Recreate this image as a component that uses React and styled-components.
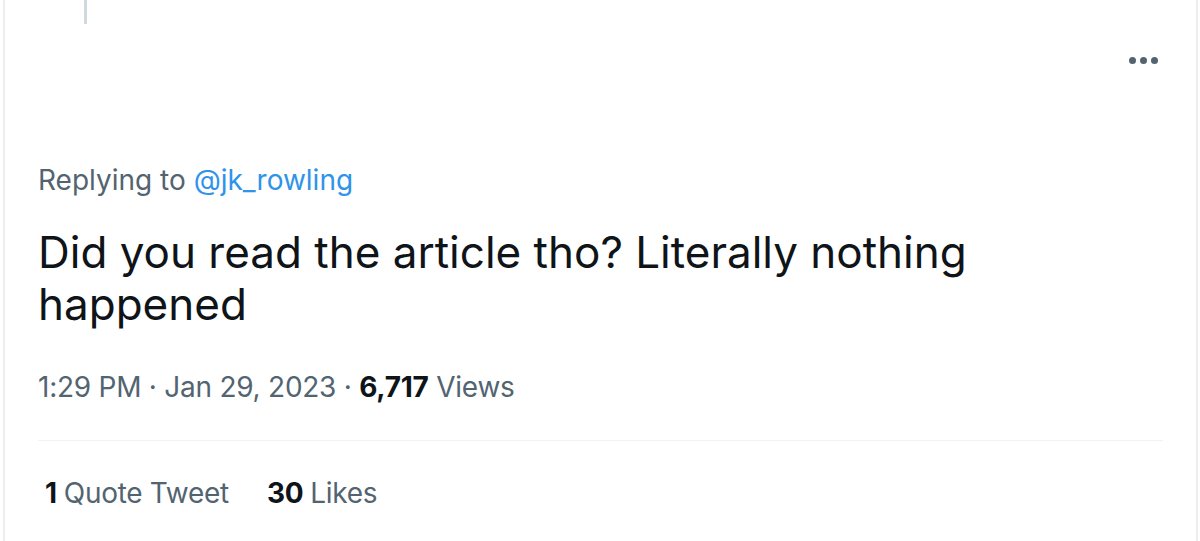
import React from "react";
import styled, { createGlobalStyle } from "styled-components";

const Global = createGlobalStyle`
  html, body { margin: 0; padding: 0; background: #fff; }
  body { font-family: Inter, "Noto Sans", sans-serif; -webkit-font-smoothing: antialiased; }
`;

const Frame = styled.div`
  position: relative;
  height: 541px;
  box-sizing: border-box;
  border-left: 2px solid #eceeef;
  border-right: 2px solid #eceeef;
  margin-left: 3px;
  width: 1195px;
  overflow: hidden;
`;

const ThreadLine = styled.div`
  position: absolute;
  left: 79px;
  top: 0;
  width: 3px;
  height: 24px;
  background: #cfd9de;
`;

const Content = styled.div`
  display: flex;
  flex-direction: column;
  padding: 0 34px 0 33px;
`;

const TopRow = styled.div`
  display: flex;
  justify-content: flex-end;
  padding-top: 52px;
  padding-right: 4px;
  height: 16px;
`;

const MoreBtn = styled.div`
  display: flex;
  gap: 4px;
  align-items: center;
`;

const Dot = styled.span`
  width: 7px;
  height: 7px;
  border-radius: 50%;
  background: #536471;
`;

const Replying = styled.div`
  margin-top: 95px;
  font-size: 28px;
  line-height: 34px;
  color: #536471;
`;

const Handle = styled.span`
  color: #2f93ea;
`;

const Body = styled.div`
  margin-top: 29px;
  font-size: 44px;
  line-height: 52px;
  color: #0f1419;
  width: 1000px;
`;

const Meta = styled.div`
  margin-top: 40px;
  font-size: 28px;
  line-height: 34px;
  color: #536471;
  letter-spacing: -0.25px;
`;

const Strong = styled.span`
  font-weight: 700;
  color: #0f1419;
`;

const Divider = styled.div`
  margin-top: 36px;
  height: 1px;
  background: #eff3f4;
  width: 1125px;
`;

const Stats = styled.div`
  display: flex;
  gap: 38px;
  margin-top: 35px;
  padding-left: 7px;
  font-size: 28px;
  line-height: 34px;
  color: #536471;
  letter-spacing: -0.3px;
`;

const Stat = styled.div`
  display: flex;
  gap: 7px;
`;

export default function App() {
  return (
    <>
      <Global />
      <Frame>
        <ThreadLine />
        <Content>
          <TopRow>
            <MoreBtn>
              <Dot /><Dot /><Dot />
            </MoreBtn>
          </TopRow>
          <Replying>
            Replying to <Handle>@jk_rowling</Handle>
          </Replying>
          <Body>Did you read the article tho? Literally nothing happened</Body>
          <Meta>
            1:29 PM · Jan 29, 2023 · <Strong>6,717</Strong> Views
          </Meta>
          <Divider />
          <Stats>
            <Stat><Strong>1</Strong><span>Quote Tweet</span></Stat>
            <Stat><Strong>30</Strong><span>Likes</span></Stat>
          </Stats>
        </Content>
      </Frame>
    </>
  );
}
